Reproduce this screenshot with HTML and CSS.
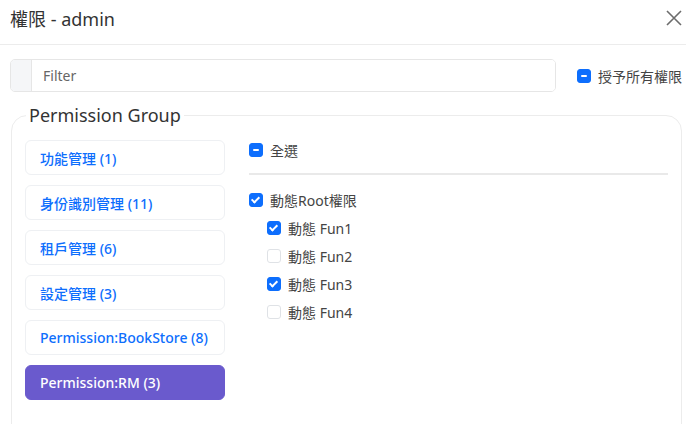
FILE: index.html
```html
<!DOCTYPE html>
<html lang="zh-Hant">
<head>
<meta charset="utf-8">
<link rel="stylesheet" href="styles.css">
</head>
<body>
<div class="modal">
  <header class="modal-header">
    <h1 class="modal-title">權限 - admin</h1>
    <button class="close" aria-label="close">
      <svg width="16" height="16" viewBox="0 0 16 16"><path d="M1 1 L15 15 M15 1 L1 15" stroke="#6c6c6c" stroke-width="1.6" fill="none"/></svg>
    </button>
  </header>
  <div class="modal-body">
    <div class="filter-row">
      <div class="input-group">
        <span class="addon"></span>
        <input class="filter" type="text" placeholder="Filter">
      </div>
      <label class="check-label grant">
        <span class="cb indeterminate"></span>授予所有權限
      </label>
    </div>
    <fieldset class="group">
      <legend>Permission Group</legend>
      <div class="group-body">
        <ul class="group-list">
          <li class="group-item">功能管理 (1)</li>
          <li class="group-item">身份識別管理 (11)</li>
          <li class="group-item">租戶管理 (6)</li>
          <li class="group-item">設定管理 (3)</li>
          <li class="group-item">Permission:BookStore (8)</li>
          <li class="group-item active">Permission:RM (3)</li>
        </ul>
        <div class="perm-panel">
          <label class="check-label all"><span class="cb indeterminate"></span>全選</label>
          <hr class="divider">
          <label class="check-label root"><span class="cb checked"></span>動態Root權限</label>
          <label class="check-label child"><span class="cb checked"></span>動態 Fun1</label>
          <label class="check-label child"><span class="cb"></span>動態 Fun2</label>
          <label class="check-label child"><span class="cb checked"></span>動態 Fun3</label>
          <label class="check-label child"><span class="cb"></span>動態 Fun4</label>
        </div>
      </div>
    </fieldset>
  </div>
</div>
</body>
</html>
```

FILE: styles.css
```css
* { box-sizing: border-box; }
html, body { margin: 0; padding: 0; background: #fff; }
body {
  font-family: "Noto Sans", "Noto Sans CJK TC", sans-serif;
  color: #212529;
  font-size: 14px;
  width: 686px;
  height: 424px;
  overflow: hidden;
}
.modal { height: 424px; overflow: hidden; }
.modal-header {
  height: 45px;
  display: flex;
  align-items: center;
  justify-content: space-between;
  padding: 0 4px 0 10px;
  border-bottom: 1px solid #ececec;
}
.modal-title {
  margin: 0;
  font-size: 18px;
  font-weight: 400;
  color: #333;
  position: relative;
  top: -4px;
}
.close {
  border: 0;
  background: none;
  padding: 0;
  width: 16px;
  height: 16px;
  display: flex;
  position: relative;
  top: -4px;
}
.modal-body { padding: 14px 5px 0 10px; }
.filter-row {
  display: flex;
  align-items: center;
  gap: 21px;
}
.input-group {
  flex: 0 0 546px;
  display: flex;
  height: 33px;
  border: 1px solid #e6e6e6;
  border-radius: 5px;
  overflow: hidden;
}
.addon {
  width: 21px;
  background: #f5f6f8;
  border-right: 1px solid #e6e6e6;
}
.filter {
  flex: 1;
  border: 0;
  outline: none;
  padding: 0 11px;
  font-family: inherit;
  font-size: 14px;
  color: #333;
}
.filter::placeholder { color: #666; }
.check-label {
  display: flex;
  align-items: center;
  gap: 7px;
  color: #444;
  font-size: 14px;
  white-space: nowrap;
}
.cb {
  width: 14px;
  height: 14px;
  border-radius: 3px;
  border: 1px solid #dfe2e6;
  background: #fff;
  position: relative;
  flex: none;
}
.cb.checked, .cb.indeterminate {
  background: #0d6efd;
  border-color: #0d6efd;
}
.cb.indeterminate::after {
  content: "";
  position: absolute;
  left: 3px;
  top: 5px;
  width: 6px;
  height: 2px;
  background: #fff;
  border-radius: 1px;
}
.cb.checked::after {
  content: "";
  position: absolute;
  left: 3px;
  top: 1px;
  width: 3px;
  height: 6px;
  border: solid #fff;
  border-width: 0 2px 2px 0;
  transform: rotate(45deg);
}
.group {
  margin: 11px 0 0 1px;
  border: 1px solid #ececec;
  border-radius: 16px;
  padding: 13px 13px 20px 13px;
  height: 360px;
}
.group legend {
  font-size: 18px;
  color: #333;
  padding: 0 3px;
  margin-left: 1px;
}
.group-body {
  display: flex;
  gap: 24px;
}
.group-list {
  list-style: none;
  margin: 0;
  padding: 0;
  width: 200px;
  display: flex;
  flex-direction: column;
  gap: 10px;
}
.group-item {
  height: 35px;
  display: flex;
  align-items: center;
  padding: 0 14px;
  border: 1px solid #eef0f3;
  border-radius: 6px;
  color: #0d6efd;
  font-weight: 500;
  font-size: 14px;
}
.group-item.active {
  background: #6a5acd;
  border-color: #6a5acd;
  color: #fff;
}
.perm-panel {
  flex: 1;
  display: flex;
  flex-direction: column;
}
.check-label.all { height: 20px; }
.divider {
  border: 0;
  border-top: 2px solid #e9e9e9;
  margin: 13px 0 15px 0;
  width: 419px;
}
.check-label.root { height: 20px; margin-bottom: 8px; }
.check-label.child { height: 20px; margin: 0 0 8px 18px; }
```
